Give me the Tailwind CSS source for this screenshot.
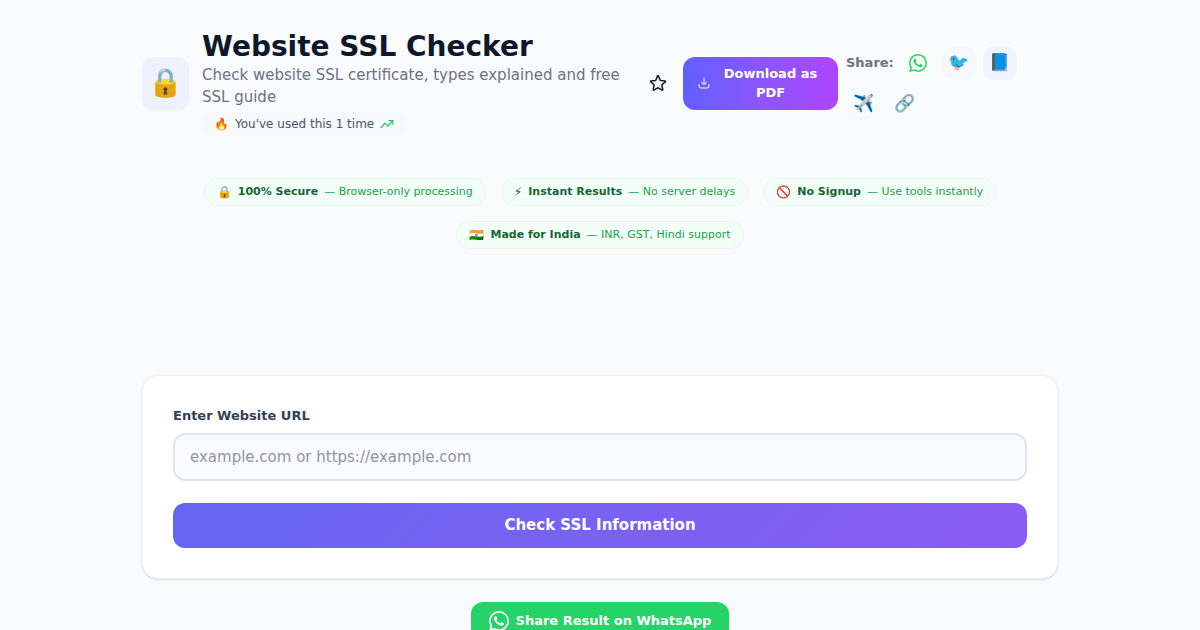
<!DOCTYPE html>
<html lang="en">
<head>
  <meta charset="UTF-8">
  <meta name="viewport" content="width=device-width, initial-scale=1.0">
  <title>Website SSL Checker</title>
  <script src="https://cdn.jsdelivr.net/npm/@tailwindcss/browser@4"></script>
</head>
<body class="bg-[#fafbfd] font-['DejaVu_Sans',sans-serif] text-[#0f172a] min-h-screen overflow-x-hidden">

  <!-- Icons -->
  <svg class="hidden">
    <symbol id="whatsapp" viewBox="0 0 24 24">
      <path fill="currentColor" d="M17.472 14.382c-.297-.149-1.758-.867-2.03-.967-.273-.099-.471-.148-.67.15-.197.297-.767.966-.94 1.164-.173.199-.347.223-.644.075-.297-.15-1.255-.463-2.39-1.475-.883-.788-1.48-1.761-1.653-2.059-.173-.297-.018-.458.13-.606.134-.133.298-.347.446-.52.149-.174.198-.298.298-.497.099-.198.05-.371-.025-.52-.075-.149-.669-1.612-.916-2.207-.242-.579-.487-.5-.669-.51-.173-.008-.371-.01-.57-.01-.198 0-.52.074-.792.372-.272.297-1.04 1.016-1.04 2.479 0 1.462 1.065 2.875 1.213 3.074.149.198 2.096 3.2 5.077 4.487.709.306 1.262.489 1.694.625.712.227 1.36.195 1.871.118.571-.085 1.758-.719 2.006-1.413.248-.694.248-1.289.173-1.413-.074-.124-.272-.198-.57-.347m-5.421 7.403h-.004a9.87 9.87 0 01-5.031-1.378l-.361-.214-3.741.982.998-3.648-.235-.374a9.86 9.86 0 01-1.51-5.26c.001-5.45 4.436-9.884 9.888-9.884 2.64 0 5.122 1.03 6.988 2.898a9.825 9.825 0 012.893 6.994c-.003 5.45-4.437 9.884-9.885 9.884m8.413-18.297A11.815 11.815 0 0012.05 0C5.495 0 .16 5.335.157 11.892c0 2.096.547 4.142 1.588 5.945L.057 24l6.305-1.654a11.882 11.882 0 005.683 1.448h.005c6.554 0 11.89-5.335 11.893-11.893a11.821 11.821 0 00-3.48-8.413z"/>
    </symbol>
  </svg>

  <main class="max-w-[916px] mx-auto pt-[30px]">

    <!-- Header -->
    <header class="flex items-center">
      <div class="shrink-0 w-[47px] h-[53px] rounded-xl bg-[#eef2ff] shadow-xs flex items-center justify-center text-[28px]">🔒</div>
      <div class="ml-[13px] flex-1 min-w-0">
        <h1 class="text-[28px] leading-[34px] font-bold">Website SSL Checker</h1>
        <p class="text-[15px] leading-[22px] text-[#6b7280]">Check website SSL certificate, types explained and free SSL guide</p>
        <div class="mt-1 inline-flex items-center gap-[6px] h-6 px-3 rounded-full bg-[#f8f9fb] text-xs text-[#4b5563]">
          <span>🔥</span>
          <span>You've used this 1 time</span>
          <svg class="w-[14px] h-[14px] text-[#22c55e]" viewBox="0 0 24 24" fill="none" stroke="currentColor" stroke-width="2" stroke-linecap="round" stroke-linejoin="round"><path d="M2 18 8.5 10.5 13.5 15.5 22 6"/><path d="M15.5 6H22v6.5"/></svg>
        </div>
      </div>

      <button class="ml-6 shrink-0 p-1" aria-label="Add to favourites">
        <svg class="size-[18px]" viewBox="0 0 24 24" fill="none" stroke="currentColor" stroke-width="2" stroke-linecap="round" stroke-linejoin="round"><path d="M11.48 2.5a.56.56 0 0 1 1.04 0l2.5 5.9a.56.56 0 0 0 .47.34l6.1.52c.5.04.7.66.32.99l-4.6 4.1a.56.56 0 0 0-.18.55l1.3 6a.56.56 0 0 1-.84.61l-5.3-3.1a.56.56 0 0 0-.58 0l-5.3 3.1a.56.56 0 0 1-.84-.61l1.3-6a.56.56 0 0 0-.18-.55l-4.6-4.1a.56.56 0 0 1 .32-.99l6.1-.52a.56.56 0 0 0 .47-.34z"/></svg>
      </button>

      <button class="ml-3 shrink-0 w-[155px] h-[53px] px-[15px] flex items-center gap-2 rounded-xl bg-linear-to-r from-[#615fff] to-[#ad46ff] text-white text-[13px] leading-[19px] font-bold">
        <svg class="shrink-0 size-[12px]" viewBox="0 0 24 24" fill="none" stroke="currentColor" stroke-width="2" stroke-linecap="round" stroke-linejoin="round"><path d="M12 2v13M7 10.500l5 5 5-5M2 15v3a4 4 0 0 0 4 4h12a4 4 0 0 0 4-4v-3"/></svg>
        <span class="flex-1">Download as PDF</span>
      </button>

      <div class="ml-2 mr-[30px] shrink-0 w-[182px] flex flex-wrap items-center gap-[7px]">
        <span class="text-[13px] font-bold text-[#6b7280]">Share:</span>
        <a href="#" aria-label="WhatsApp" class="size-[34px] rounded-xl bg-[#f7fefa] text-[#25d366] flex items-center justify-center"><svg class="size-[18px]"><use href="#whatsapp"/></svg></a>
        <a href="#" aria-label="Twitter" class="size-[34px] rounded-xl bg-[#f5f8ff] flex items-center justify-center text-[17px]">🐦</a>
        <a href="#" aria-label="Facebook" class="size-[34px] rounded-xl bg-[#eff4ff] flex items-center justify-center text-[17px]">📘</a>
        <a href="#" aria-label="Telegram" class="size-[34px] rounded-xl bg-[#f4fcff] flex items-center justify-center text-[17px]">✈️</a>
        <button aria-label="Copy link" class="size-[34px] rounded-xl flex items-center justify-center text-[17px]">🔗</button>
      </div>
    </header>

    <!-- Trust badges -->
    <ul class="mt-[42px] flex flex-wrap justify-center gap-[15px] text-[11px] text-[#16a34a]">
      <li class="h-7 px-3 rounded-full border border-[#e6faed] bg-[#f4fef8] flex items-center gap-[6px]"><span class="text-xs">🔒</span><strong class="text-[#166534]">100% Secure</strong><span>— Browser-only processing</span></li>
      <li class="h-7 px-3 rounded-full border border-[#e6faed] bg-[#f4fef8] flex items-center gap-[6px]"><span class="text-xs text-[#374151]">⚡︎</span><strong class="text-[#166534]">Instant Results</strong><span>— No server delays</span></li>
      <li class="h-7 px-3 rounded-full border border-[#e6faed] bg-[#f4fef8] flex items-center gap-[6px]"><span class="text-xs">🚫</span><strong class="text-[#166534]">No Signup</strong><span>— Use tools instantly</span></li>
      <li class="h-7 px-3 rounded-full border border-[#e6faed] bg-[#f4fef8] flex items-center gap-[6px]"><span class="text-xs">🇮🇳</span><strong class="text-[#166534]">Made for India</strong><span>— INR, GST, Hindi support</span></li>
    </ul>

    <!-- Form -->
    <form class="mt-[126px] p-[30px] rounded-2xl border border-[#f0f1f5] bg-white shadow-sm" onsubmit="return false">
      <label for="url" class="block text-[13px] leading-[19px] font-bold text-[#334155]">Enter Website URL</label>
      <input id="url" type="text" placeholder="example.com or https://example.com" class="mt-2 block w-full h-12 px-[15px] rounded-xl border-2 border-[#e2e5ee] bg-[#fafbfd] text-[15px] placeholder:text-[#8f959d]">
      <button class="mt-[22px] block w-full h-[45px] rounded-xl bg-linear-135 from-[#6366f1] to-[#8b5cf6] text-white text-[15px] font-bold">Check SSL Information</button>
    </form>

    <button class="mt-[23px] mx-auto h-[38px] px-[18px] flex items-center gap-[7px] rounded-xl bg-[#25d366] text-white text-[13px] font-bold">
      <svg class="size-5"><use href="#whatsapp"/></svg>
      Share Result on WhatsApp
    </button>
  </main>
</body>
</html>
